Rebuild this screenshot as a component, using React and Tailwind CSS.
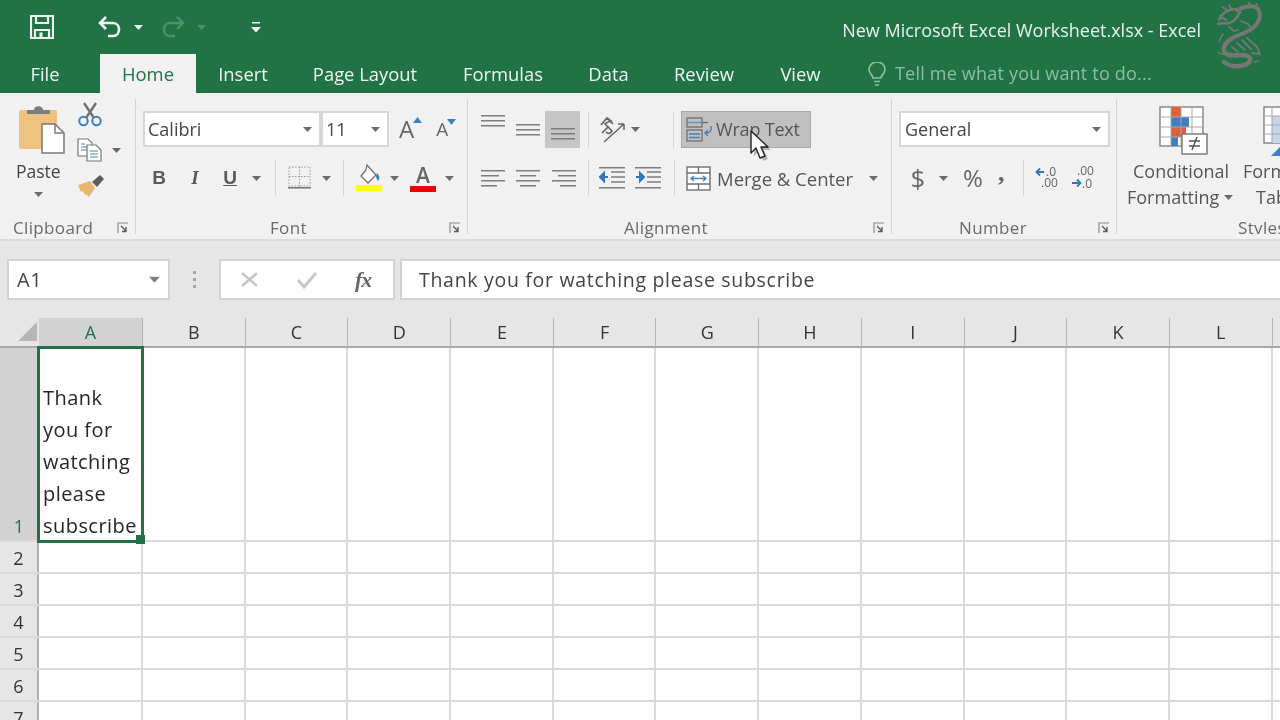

import React from "react";

const Caret = ({ className = "", color = "#6a6a6a" }) => (
  <svg width="9" height="5" viewBox="0 0 9 5" className={"shrink-0 " + className}><path d="M0 0h9L4.5 5z" fill={color} /></svg>
);

const Launcher = () => (
  <svg width="12" height="12" viewBox="0 0 12 12" className="shrink-0">
    <path d="M1 11V1h10" fill="none" stroke="#8a8a8a" strokeWidth="1.2" />
    <path d="M4 4l5 5M9 5v4.500H5" fill="none" stroke="#5a5a5a" strokeWidth="1.4" />
  </svg>
);

const VSep = ({ className = "" }) => <div className={"w-px h-[36px] bg-[#d4d4d4] shrink-0 " + className} />;

const Lines = ({ widths, gap = 5, align = "start", w = 24, color = "#7d7d7d" }) => {
  const h = (widths.length - 1) * gap + 2;
  return (
    <svg width={w} height={h} viewBox={`0 0 ${w} ${h}`} className="shrink-0">
      {widths.map((l, i) => {
        const x = align === "start" ? 0 : align === "center" ? (w - l) / 2 : w - l;
        return <rect key={i} x={x} y={i * gap} width={l} height="1.500" fill={color} />;
      })}
    </svg>
  );
};

const Clip = () => (
  <svg width="46" height="49" viewBox="0 0 46 49">
    <rect x="0" y="5" width="38" height="39" rx="2" fill="#eec27e" />
    <path d="M8 9V5h7c0-5 9-5 9 0h7v4z" fill="#7c7c7c" />
    <path d="M23 19h13l9 9v20H23z" fill="#fff" stroke="#7a7a7a" strokeWidth="1.5" />
    <path d="M36 19v9h9" fill="none" stroke="#7a7a7a" strokeWidth="1.5" />
  </svg>
);

const Scissors = () => (
  <svg width="26" height="25" viewBox="0 0 26 25">
    <path d="M7 1l10 15M19 1L9 16" stroke="#6f6f6f" strokeWidth="2.400" fill="none" />
    <circle cx="6.500" cy="19" r="4.200" fill="none" stroke="#3f7fbf" strokeWidth="2" />
    <circle cx="19.500" cy="19" r="4.200" fill="none" stroke="#3f7fbf" strokeWidth="2" />
  </svg>
);

const CopyIcon = () => (
  <svg width="26" height="24" viewBox="0 0 26 24">
    <path d="M1 1h10l4 4v13H1z" fill="#fff" stroke="#777" strokeWidth="1.200" />
    <path d="M4 6h4M4 9h6M4 12h6" stroke="#4a86c0" strokeWidth="1" />
    <path d="M10 7h9l5 5v11H10z" fill="#fff" stroke="#777" strokeWidth="1.200" />
    <path d="M13 13h8M13 16h8M13 19h8" stroke="#4a86c0" strokeWidth="1.200" />
  </svg>
);

const Brush = () => (
  <svg width="28" height="24" viewBox="0 0 28 24">
    <path d="M1 11l12-4 5 7-6 9-3-3-1 1-2-4-2 1z" fill="#e6b76e" />
    <path d="M15 8l8-7 4 4-7 8z" fill="#5e5e5e" />
  </svg>
);

const Borders = () => (
  <svg width="24" height="24" viewBox="0 0 24 24">
    <rect x="1" y="1" width="21" height="19" fill="none" stroke="#9a9a9a" strokeWidth="1" strokeDasharray="1.500 1.500" />
    <path d="M11.500 1v19M1 10.500h21" stroke="#9a9a9a" strokeWidth="1" strokeDasharray="1.500 1.500" />
    <rect x="0" y="21" width="23" height="1.600" fill="#7a7a7a" />
  </svg>
);

const Fill = () => (
  <svg width="26" height="28" viewBox="0 0 26 28">
    <path d="M11 1l-1 5-5 6 7 7 8-8z" fill="#fff" stroke="#6f6f6f" strokeWidth="1.300" />
    <path d="M21 9c3 3 3 6 1 8-1-2-2-3-2-5z" fill="#3f7fbf" />
    <rect x="0" y="21" width="26" height="6" fill="#ffff00" />
  </svg>
);

const Indent = ({ rev }) => (
  <svg width="27" height="22" viewBox="0 0 27 22">
    <rect x="0" y="0" width="26" height="1.500" fill="#7d7d7d" />
    <rect x="0" y="20" width="26" height="1.500" fill="#7d7d7d" />
    <path d="M12 5h14M12 10h14M12 15h14" stroke="#7d7d7d" strokeWidth="1.500" />
    {rev
      ? <path d="M1 10h6M5 6l4 4-4 4z" stroke="#2f78bd" strokeWidth="2" fill="#2f78bd" />
      : <path d="M9 10H3M5 6l-4 4 4 4z" stroke="#2f78bd" strokeWidth="2" fill="#2f78bd" />}
  </svg>
);

const Orient = () => (
  <svg width="28" height="28" viewBox="0 0 28 28">
    <path d="M5 26L25 8M25 8h-6M25 8v6" stroke="#666" strokeWidth="1.500" fill="none" />
    <path d="M2 9l6-7 4 3-3 1-3 2 3 3M8 2l6 6" stroke="#666" strokeWidth="1.700" fill="none" />
    <path d="M3 17l6-6 4 4c-2 3-4 3-6 1" stroke="#666" strokeWidth="1.700" fill="none" />
  </svg>
);

const WrapIcon = () => (
  <svg width="27" height="25" viewBox="0 0 27 25">
    <rect x="1" y="1" width="15" height="9" fill="none" stroke="#6f6f6f" strokeWidth="1.300" />
    <path d="M2 5.500h13" stroke="#5b97cf" strokeWidth="1.500" />
    <path d="M16 5.500h6" stroke="#6f6f6f" strokeWidth="1.300" />
    <rect x="1" y="13" width="15" height="11" fill="none" stroke="#6f6f6f" strokeWidth="1.300" />
    <path d="M3 17h11M3 20.500h11" stroke="#3f7fbf" strokeWidth="1.300" />
    <path d="M25 9c1 5-1 7-5 7M22 13l-3 3 3 3" stroke="#3f7fbf" strokeWidth="1.400" fill="none" />
  </svg>
);

const MergeIcon = () => (
  <svg width="25" height="25" viewBox="0 0 25 25">
    <rect x="1" y="1" width="23" height="23" fill="#fff" stroke="#6f6f6f" strokeWidth="1.400" />
    <path d="M1 7h23M1 18h23M12.500 1v6M12.500 18v6" stroke="#6f6f6f" strokeWidth="1.400" />
    <path d="M5 12.500h15M8 10l-3 2.500L8 15M17 10l3 2.500L17 15" stroke="#3f7fbf" strokeWidth="1.300" fill="none" />
  </svg>
);

const CondFormat = () => (
  <svg width="50" height="50" viewBox="0 0 50 50">
    <rect x="1" y="1" width="43" height="39" fill="#fff" stroke="#7a7a7a" strokeWidth="1.300" />
    <rect x="12" y="1" width="10" height="10" fill="#e0603a" />
    <rect x="12" y="11" width="18" height="10" fill="#3f7fc4" />
    <rect x="12" y="21" width="15" height="10" fill="#e0603a" />
    <rect x="12" y="31" width="7" height="9" fill="#3f7fc4" />
    <path d="M12 1v39M22 1v39M33 1v39M1 11h43M1 21h43M1 31h43" stroke="#a8a8a8" strokeWidth="1" />
    <rect x="23" y="28" width="25" height="20" fill="#fff" stroke="#6a6a6a" strokeWidth="1.300" />
    <path d="M30 35h11M30 40h11M38 31l-5 13" stroke="#555" strokeWidth="1.500" fill="none" />
  </svg>
);

const TableIcon = () => (
  <svg width="18" height="50" viewBox="0 0 18 50">
    <rect x="1" y="1" width="44" height="36" fill="#fff" stroke="#7a7a7a" strokeWidth="1.300" />
    <rect x="9" y="10" width="25" height="27" fill="#c5d6ea" />
    <path d="M9 1v36M1 10h44M1 19h44M1 28h44" stroke="#a8a8a8" strokeWidth="1" />
    <path d="M8 50l10-10v10z" fill="#3f7fc4" />
  </svg>
);

const Dragon = () => (
  <svg width="46" height="68" viewBox="0 0 46 68" className="shrink-0">
    <g fill="none" stroke="#767676" strokeLinecap="round" strokeLinejoin="round">
      <path d="M20 8c6-3 17-6 21-1 4 6 1 14-5 19-6 5-14 6-20 10" strokeWidth="4" />
      <path d="M16 36c-7 3-10 9-9 13 2 6 10 4 16 4 6 0 11 1 10 5-1 5-10 7-17 6-4-1-7-2-9-4" strokeWidth="4.500" />
      <path d="M30 36l10 9 3 7-8-1M25 38l9 9M20 41l8 7M15 45l6 5" strokeWidth="1.800" />
      <path d="M2 18c3-6 7-11 18-11M0 22l6-1c5 1 10 0 14-6l3-5M3 14l6 4" strokeWidth="2.600" />
      <path d="M24 19l7 3 3 4M12 25l5 4 4-1M5 5l7 4M12 3l3 5M32 1l1 5M40 2l-1 5" strokeWidth="1.800" />
      <path d="M6 32c-2 3-3 5-4 8M8 52c-3 1-5 0-7-2M37 60l5-1" strokeWidth="1.400" />
    </g>
  </svg>
);

const Cursor = () => (
  <svg width="24" height="34" viewBox="0 0 24 34" className="absolute left-[750px] top-[130px]">
    <path d="M2 3v21l5-5 4 10 5-2-4-9h7z" fill="#000" opacity="0.25" transform="translate(2 2)" />
    <path d="M1 1v22l5-5 4 10 5-2-4-9h7z" fill="#fff" stroke="#222" strokeWidth="1.400" strokeLinejoin="round" />
  </svg>
);

const Combo = ({ w, text, pad = "pl-[3px]", caretPad = "pr-[7px]" }) => (
  <div className={`h-[36px] bg-white border-2 border-[#d6d6d6] flex items-center justify-between text-[18px] text-[#444] shrink-0 ${w} ${pad} ${caretPad}`}>
    <span>{text}</span>
    <Caret />
  </div>
);

const GroupLabel = ({ label, launcher = true, labelClass = "" }) => (
  <div className="h-[12px] mt-auto flex items-center relative text-[17px] text-[#6a6a6a] tracking-[0.35px] whitespace-nowrap">
    <span className={labelClass}>{label}</span>
    {launcher && <span className="ml-auto mr-[6px] flex"><Launcher /></span>}
  </div>
);

const colLetters = ["A", "B", "C", "D", "E", "F", "G", "H", "I", "J", "K", "L", "M"];
const rows = [2, 3, 4, 5, 6, 7];
const tabs = [
  ["Insert", "w-[94px]"],
  ["Page Layout", "w-[150px]"],
  ["Formulas", "w-[126px]"],
  ["Data", "w-[85px]"],
  ["Review", "w-[106px]"],
  ["View", "w-[87px]"],
];

export default function App() {
  return (
    <div className="relative w-[1280px] h-[720px] overflow-hidden bg-white text-[#444] blur-[0.4px]" style={{ fontFamily: '"Open Sans","Noto Sans",sans-serif' }}>
      {/* Title bar */}
      <div className="h-[54px] bg-[#217346] flex items-center">
        <svg width="24" height="24" viewBox="0 0 24 24" className="ml-[30px] shrink-0">
          <path d="M1 1h22v22H1z" fill="none" stroke="#eef5f0" strokeWidth="2.200" />
          <path d="M6 1v7h12V1M5 23v-8h14v8" fill="none" stroke="#eef5f0" strokeWidth="2.200" />
          <rect x="9.500" y="17.500" width="3" height="5" fill="#eef5f0" />
        </svg>
        <svg width="24" height="22" viewBox="0 0 24 22" className="ml-[44px] shrink-0">
          <path d="M8 1L2 7l6 6M2 7h13c8 0 8 13 0 13h-5" fill="none" stroke="#f2f7f4" strokeWidth="2.600" />
        </svg>
        <Caret className="ml-[12px]" color="#eef5f0" />
        <svg width="24" height="22" viewBox="0 0 24 22" className="ml-[18px] shrink-0">
          <path d="M16 1l6 6-6 6M22 7H9c-8 0-8 13 0 13h5" fill="none" stroke="#4f8f6c" strokeWidth="2.400" />
        </svg>
        <Caret className="ml-[12px]" color="#4f8f6c" />
        <svg width="10" height="12" viewBox="0 0 10 12" className="ml-[45px] shrink-0">
          <path d="M1 1h8v1.600H1zM0 6h10L5 11.500z" fill="#f2f7f4" />
        </svg>
        <div className="ml-[580px] mt-[6px] text-[18px] text-[#e8f1ec] whitespace-nowrap w-[360px] text-right">New Microsoft Excel Worksheet.xlsx - Excel</div>
        <div className="ml-[16px] mt-[17px]"><Dragon /></div>
      </div>
      {/* Tabs */}
      <div className="h-[39px] bg-[#217346] flex items-end text-[18.400px] text-[#eef5f0] whitespace-nowrap">
        <div className="w-[100px] h-[39px] flex items-center justify-center pr-[10px]">File</div>
        <div className="w-[96px] h-[39px] bg-[#f1f1f1] text-[#217346] flex items-center justify-center">Home</div>
        {tabs.map(([t, w]) => (
          <div key={t} className={`${w} h-[39px] flex items-center justify-center`}>{t}</div>
        ))}
        <div className="h-[39px] flex items-center pl-[24px] text-[#8fbda3] text-[18px]">
          <svg width="18" height="24" viewBox="0 0 18 24" className="mr-[9px] shrink-0">
            <path d="M5 16c0-3-4-4-4-8.500a8 7.500 0 0 1 16 0C17 12 13 13 13 16zM6 19.500h6M7 23h4" fill="none" stroke="#8fbda3" strokeWidth="1.700" />
          </svg>
          <span className="tracking-[0.2px]">Tell me what you want to do...</span>
        </div>
      </div>
      {/* Ribbon */}
      <div className="h-[148px] bg-[#f1f1f1] border-b-2 border-[#dcdcdc] flex">
        {/* Clipboard */}
        <div className="w-[136px] shrink-0 flex flex-col border-r border-[#d4d4d4] mt-[6px] mb-[5px]">
          <div className="flex pt-[6px] pl-[19px]">
            <div className="w-[58px] flex flex-col">
              <Clip />
              <div className="text-[17.500px] leading-[24px] -ml-[3px] mt-[5px]">Paste</div>
              <Caret className="ml-[15px] mt-[9px]" />
            </div>
            <div className="flex flex-col -mt-[3px]">
              <Scissors />
              <div className="flex items-center mt-[11px]"><CopyIcon /><Caret className="ml-[9px]" /></div>
              <div className="mt-[12px]"><Brush /></div>
            </div>
          </div>
          <GroupLabel label="Clipboard" labelClass="pl-[13px]" />
        </div>
        {/* Font */}
        <div className="w-[332px] shrink-0 flex flex-col border-r border-[#d4d4d4] mt-[6px] mb-[5px]">
          <div className="flex items-center pt-[12px] pl-[7px]">
            <Combo w="w-[178px]" text="Calibri" />
            <Combo w="w-[68px]" text="11" />
            <span className="text-[24px] leading-none text-[#666] ml-[10px] flex items-start">A<svg width="9" height="6" viewBox="0 0 9 6" className="-ml-[1px]"><path d="M0 6h9L4.500 0z" fill="#3f7fbf" /></svg></span>
            <span className="text-[19px] leading-none text-[#666] ml-[14px] flex items-start">A<svg width="9" height="6" viewBox="0 0 9 6" className="-ml-[1px] -mt-[1px]"><path d="M0 0h9L4.500 6z" fill="#3f7fbf" /></svg></span>
          </div>
          <div className="flex items-center h-[36px] mt-[13px] pl-[16px]">
            <span className="w-[14px] font-bold text-[19px] text-[#5a5a5a] text-center" style={{ fontFamily: '"Liberation Sans"' }}>B</span>
            <span className="w-[12px] ml-[23px] italic font-bold text-[19px] text-[#5a5a5a] text-center" style={{ fontFamily: '"Liberation Serif"' }}>I</span>
            <span className="w-[16px] ml-[21px] font-bold underline text-[19px] text-[#5a5a5a] text-center" style={{ fontFamily: '"Liberation Sans"' }}>U</span>
            <Caret className="ml-[14px]" />
            <VSep className="ml-[14px]" />
            <span className="ml-[12px] flex"><Borders /></span>
            <Caret className="ml-[10px]" />
            <VSep className="ml-[12px]" />
            <span className="ml-[12px] flex"><Fill /></span>
            <Caret className="ml-[8px]" />
            <span className="ml-[11px] w-[26px] flex flex-col items-center">
              <span className="text-[21px] leading-[21px] font-semibold text-[#666]">A</span>
              <span className="w-[26px] h-[6px] bg-[#ee0000]" />
            </span>
            <Caret className="ml-[9px]" />
          </div>
          <GroupLabel label="Font" labelClass="absolute left-[134px]" />
        </div>
        {/* Alignment */}
        <div className="w-[424px] shrink-0 flex flex-col border-r border-[#d4d4d4] mt-[6px] mb-[5px]">
          <div className="flex items-center h-[37px] mt-[12px] pl-[13px]">
            <div className="w-[35px] self-start pt-[4px]"><Lines widths={[24, 24, 24]} /></div>
            <div className="w-[29px] flex"><Lines widths={[24, 24, 24]} /></div>
            <div className="w-[35px] h-[37px] bg-[#c6c6c6] flex items-end justify-center pb-[8px]"><Lines widths={[24, 24, 24]} /></div>
            <VSep className="ml-[8px] mr-[10px]" />
            <Orient />
            <Caret className="ml-[4px]" />
            <VSep className="ml-[33px] mr-[7px]" />
            <div className="w-[130px] h-[37px] bg-[#c0c0c0] border border-[#a8a8a8] flex items-center pl-[4px] text-[18px] text-[#555] whitespace-nowrap">
              <WrapIcon />
              <span className="ml-[3px] tracking-[-0.2px]">Wrap Text</span>
            </div>
          </div>
          <div className="flex items-center h-[36px] mt-[12px] pl-[13px]">
            <div className="w-[35px] flex"><Lines widths={[24, 18, 24, 16]} gap={5} /></div>
            <div className="w-[36px] flex"><Lines widths={[24, 16, 24, 16]} align="center" /></div>
            <div className="w-[28px] flex"><Lines widths={[24, 18, 24, 16]} align="end" /></div>
            <VSep className="ml-[8px] mr-[10px]" />
            <Indent />
            <span className="ml-[9px] flex"><Indent rev /></span>
            <VSep className="ml-[12px] mr-[11px]" />
            <MergeIcon />
            <span className="ml-[6px] mt-[2px] text-[18.500px] text-[#555] whitespace-nowrap w-[152px]">Merge &amp; Center</span>
            <Caret />
          </div>
          <GroupLabel label="Alignment" labelClass="absolute left-[156px]" />
        </div>
        {/* Number */}
        <div className="w-[225px] shrink-0 flex flex-col border-r border-[#d4d4d4] mt-[6px] mb-[5px]">
          <div className="flex pt-[12px] pl-[7px]"><Combo w="w-[211px]" text="General" pad="pl-[4px]" /></div>
          <div className="flex items-center h-[36px] mt-[13px] pl-[18px] text-[#666]">
            <span className="text-[25px] leading-none w-[16px] text-center">$</span>
            <Caret className="ml-[13px]" />
            <span className="text-[24px] leading-none ml-[13px] w-[24px] text-center">%</span>
            <span className="text-[26px] leading-none ml-[13px] w-[8px] font-bold -mt-[10px]" style={{ fontFamily: '"Liberation Serif"' }}>,</span>
            <VSep className="ml-[17px] mr-[11px]" />
            <svg width="26" height="26" viewBox="0 0 26 26" className="shrink-0 overflow-visible">
              <path d="M9 7H2M5 3.500L1.500 7 5 10.500" stroke="#2f78bd" strokeWidth="1.800" fill="none" />
              <text x="11" y="11" fontSize="12" fill="#666">.0</text>
              <text x="6" y="22" fontSize="12" fill="#666">.00</text>
            </svg>
            <svg width="26" height="26" viewBox="0 0 26 26" className="ml-[10px] shrink-0 overflow-visible">
              <text x="6" y="10" fontSize="12" fill="#666">.00</text>
              <path d="M1 18h8M6 14.500L9.500 18 6 21.500" stroke="#2f78bd" strokeWidth="1.800" fill="none" />
              <text x="11" y="23" fontSize="12" fill="#666">.0</text>
            </svg>
          </div>
          <GroupLabel label="Number" labelClass="absolute left-[67px]" />
        </div>
        {/* Styles */}
        <div className="flex-1 flex flex-col mt-[6px] mb-[5px] text-[18px] text-[#555] whitespace-nowrap overflow-hidden">
          <div className="flex pt-[7px]">
            <div className="w-[126px] shrink-0 flex flex-col pl-[10px]">
              <span className="flex pl-[32px]"><CondFormat /></span>
              <span className="leading-[26px] mt-[2px] pl-[6px]">Conditional</span>
              <span className="leading-[26px] flex items-center">Formatting<Caret className="ml-[5px]" /></span>
            </div>
            <div className="flex flex-col shrink-0">
              <span className="flex pl-[20px]"><TableIcon /></span>
              <span className="leading-[26px] mt-[2px]">Format as</span>
              <span className="leading-[26px] pl-[13px]">Table</span>
            </div>
          </div>
          <GroupLabel label="Styles" launcher={false} labelClass="pl-[121px]" />
        </div>
      </div>
      {/* Formula bar */}
      <div className="h-[77px] bg-[#e6e6e6] flex pt-[18px] text-[19px]">
        <div className="ml-[7px] w-[163px] h-[41px] bg-white border-2 border-[#d2d2d2] flex items-center justify-between pl-[8px] pr-[9px]">
          <span className="tracking-[0.6px] text-[20px] mt-[1px]">A1</span><Caret color="#808080" className="scale-125" />
        </div>
        <div className="w-[49px] h-[41px] flex flex-col items-center justify-center gap-[4px]">
          <span className="w-[3px] h-[3px] bg-[#a5a5a5]" /><span className="w-[3px] h-[3px] bg-[#a5a5a5]" /><span className="w-[3px] h-[3px] bg-[#a5a5a5]" />
        </div>
        <div className="w-[176px] h-[41px] bg-white border-2 border-[#d2d2d2] flex items-center pl-[19px]">
          <svg width="19" height="17" viewBox="0 0 19 17" className="shrink-0"><path d="M2 2l15 13M17 2L2 15" stroke="#c6c6c6" strokeWidth="2.500" /></svg>
          <svg width="22" height="18" viewBox="0 0 22 18" className="ml-[37px] shrink-0"><path d="M2 9l6 7L20 2" fill="none" stroke="#c6c6c6" strokeWidth="2.800" /></svg>
          <span className="ml-[37px] italic font-bold text-[#666] text-[22px] tracking-[-1px] leading-none" style={{ fontFamily: '"Liberation Serif"' }}>fx</span>
        </div>
        <div className="ml-[5px] flex-1 h-[41px] bg-white border-2 border-r-0 border-[#d2d2d2] flex items-center pl-[17px] text-[#444] font-medium text-[19.500px] whitespace-nowrap tracking-[0.7px]">
          <span className="mt-[1px]">Thank you for watching please subscribe</span>
        </div>
      </div>
      {/* Column headers */}
      <div className="h-[30px] bg-[#e6e6e6] flex border-b-2 border-[#a9a9a9] text-[18px] text-[#333]">
        <div className="w-[39px] shrink-0 flex items-end justify-end pr-[1px] pb-[5px]">
          <svg width="20" height="19" viewBox="0 0 20 19"><path d="M19 0v19H0z" fill="#b6b6b6" /></svg>
        </div>
        {colLetters.map((c, i) => (
          <div key={c} className={i === 0
            ? "w-[104px] shrink-0 bg-[#d2d2d2] text-[#217346] flex items-center justify-center border-r border-[#b5b5b5]"
            : "w-[102.700px] shrink-0 flex items-center justify-center border-r border-[#b5b5b5]"}>{c}</div>
        ))}
      </div>
      {/* Row 1 */}
      <div className="h-[194px] flex border-b-2 border-[#dadada]">
        <div className="w-[39px] shrink-0 bg-[#d2d2d2] border-r border-[#a9a9a9] text-[#217346] text-[18px] flex items-end justify-center">1</div>
        <div className="w-[104px] shrink-0 border-r-2 border-[#dadada] relative flex items-end pl-[4px] text-[20px] font-medium leading-[32px] text-[#25252e] tracking-[0.45px]">
          <div className="-mb-[2px]">Thank<br />you for<br />watching<br />please<br />subscribe</div>
          <div className="absolute -left-[2px] -top-[2px] w-[107px] h-[197px] border-[3px] border-[#217346]" />
          <div className="absolute -right-[4px] -bottom-[4px] w-[9px] h-[9px] bg-[#217346]" />
        </div>
        {colLetters.slice(1).map((c) => <div key={c} className="w-[102.700px] shrink-0 border-r-2 border-[#dadada]" />)}
      </div>
      {rows.map((r) => (
        <div key={r} className="h-[32px] flex border-b-2 border-[#dadada]">
          <div className="w-[39px] shrink-0 bg-[#e6e6e6] border-r-2 border-[#b0b0b0] text-[18px] text-[#333] flex items-center justify-center pt-[2px]">{r}</div>
          {colLetters.map((c, i) => <div key={c} className={i === 0 ? "w-[104px] shrink-0 border-r-2 border-[#dadada]" : "w-[102.700px] shrink-0 border-r-2 border-[#dadada]"} />)}
        </div>
      ))}
      <Cursor />
    </div>
  );
}
